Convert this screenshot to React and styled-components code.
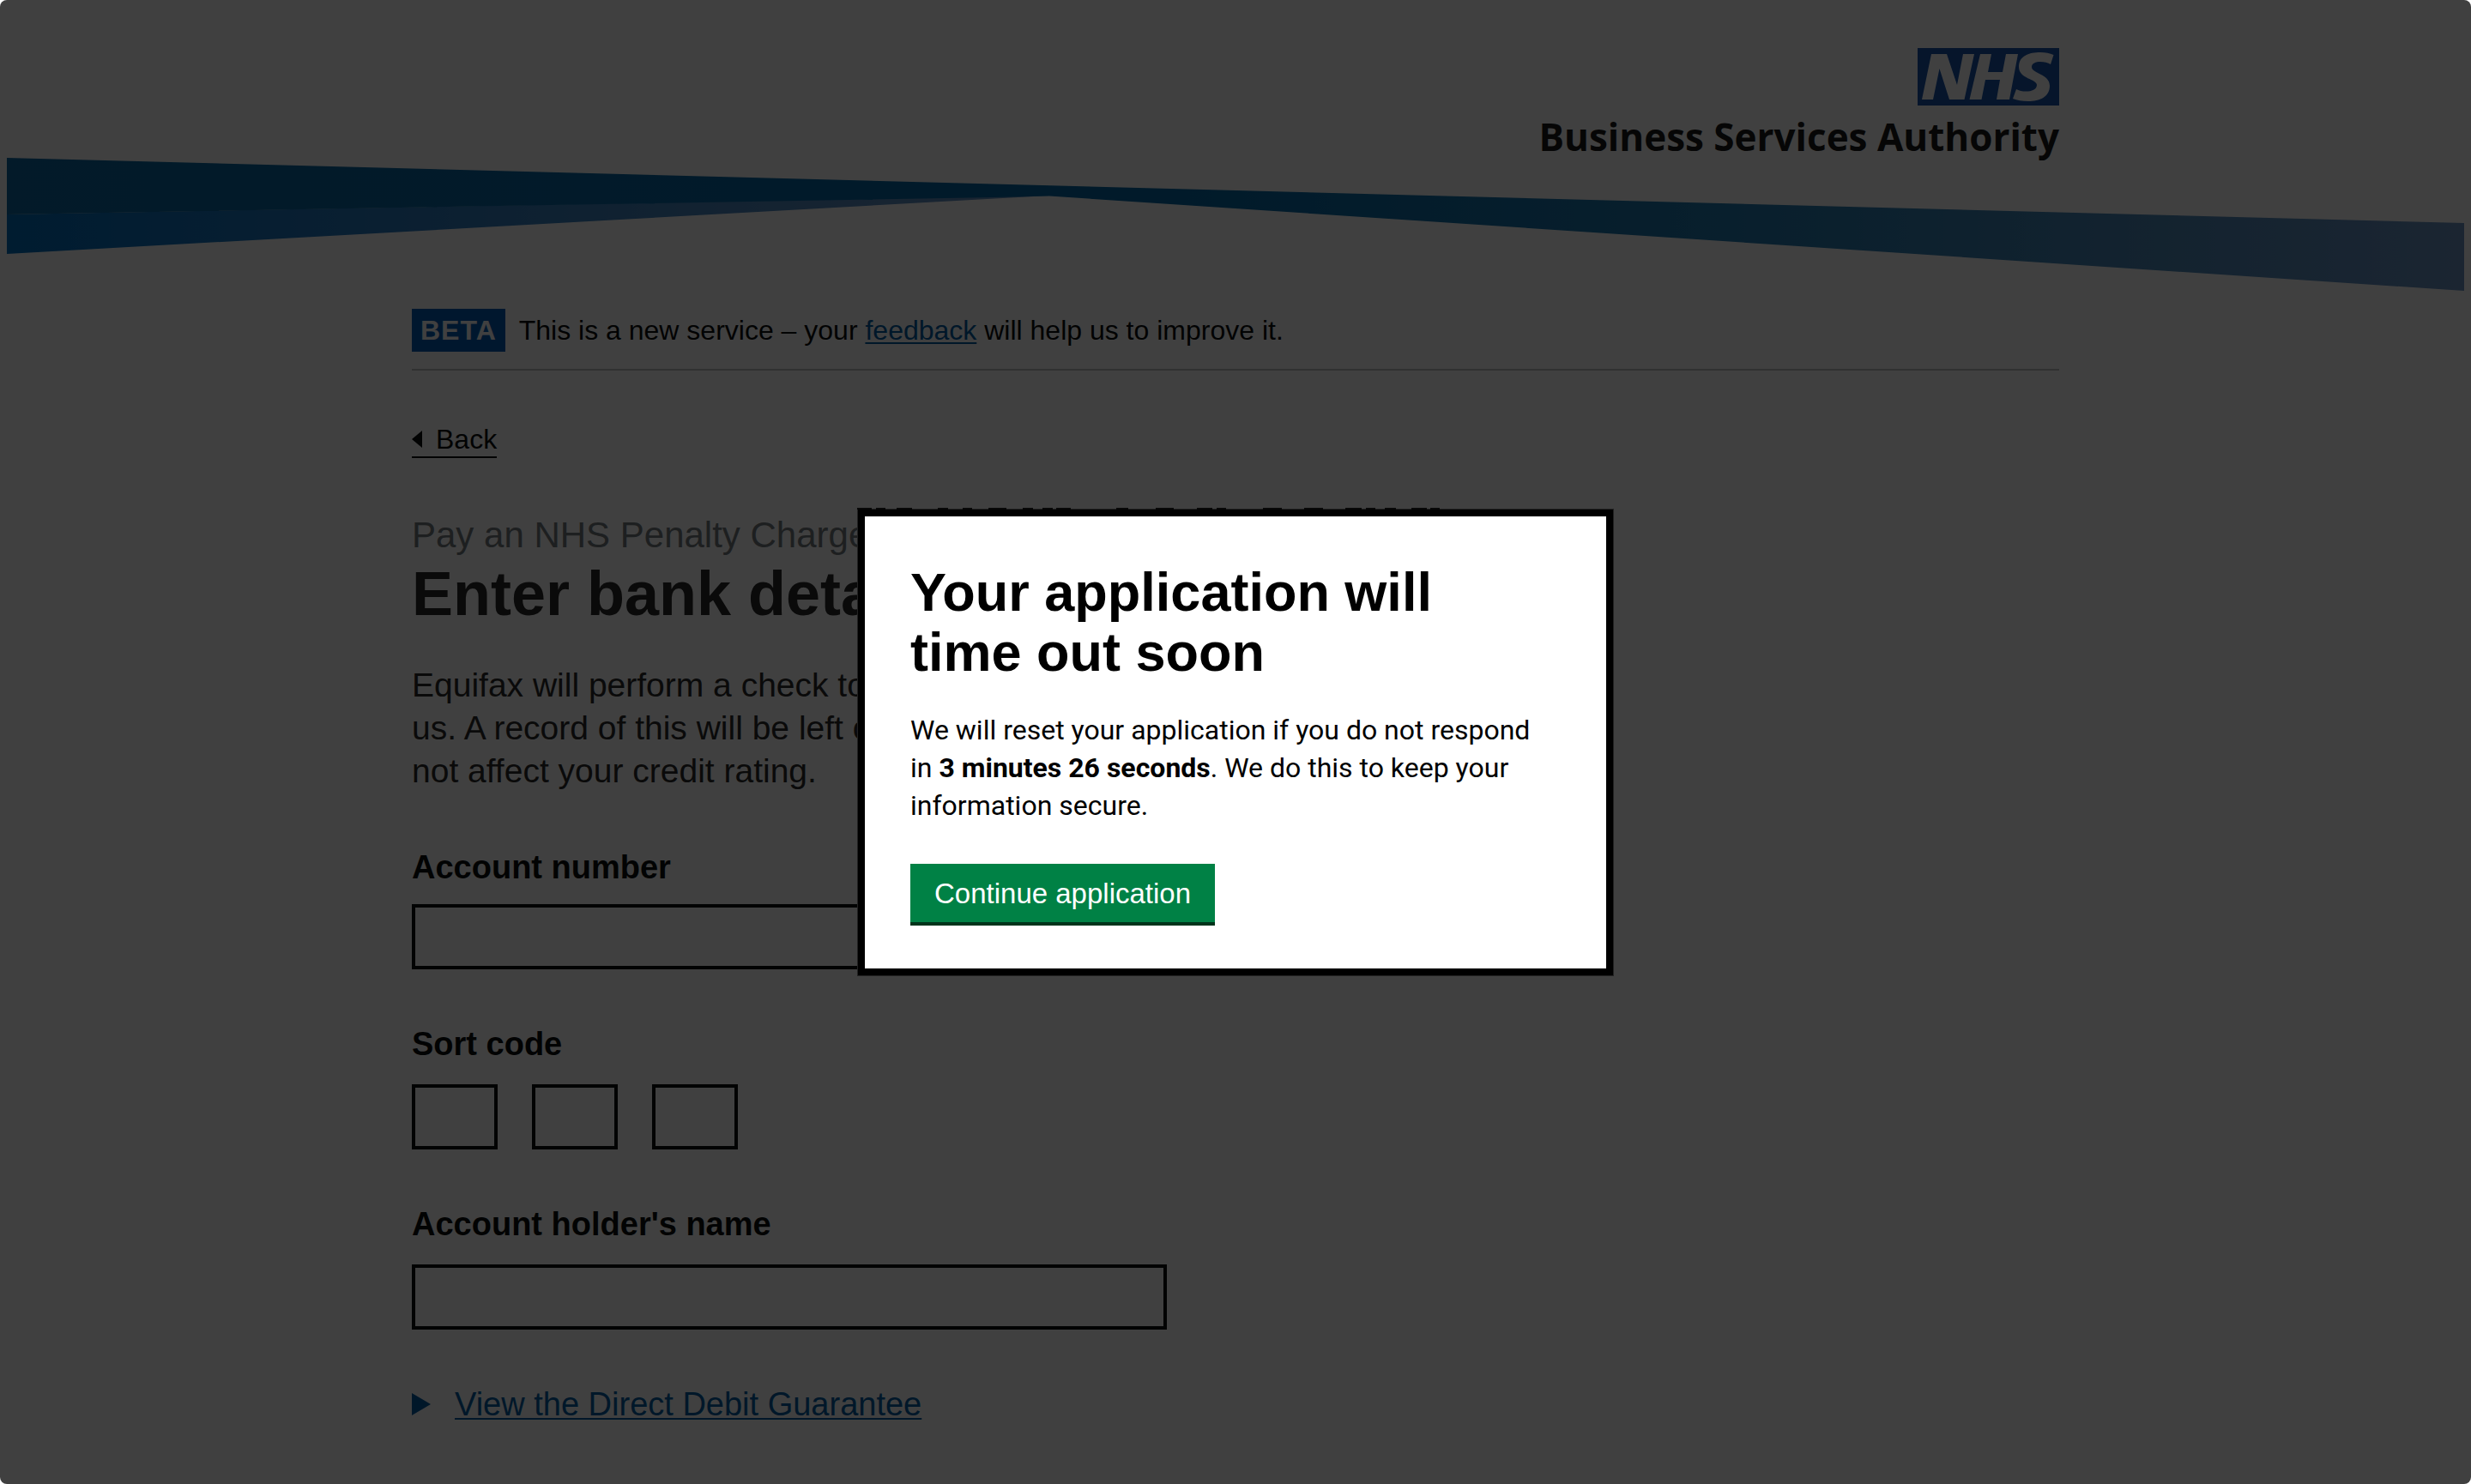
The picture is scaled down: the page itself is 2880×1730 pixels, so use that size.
import React from "react";
import styled, { createGlobalStyle } from "styled-components";

const GlobalStyle = createGlobalStyle`
  *, *::before, *::after { box-sizing: border-box; }
  html { background: #fff; }
  body {
    margin: 0;
    color: #0b0c0c;
    font-family: "Liberation Sans", Arial, sans-serif;
    font-size: 32px;
    line-height: 40px;
  }
`;

const Page = styled.div`
  position: relative;
  min-height: 100vh;
  overflow: hidden;
  border-radius: 8px;
  background: #fff;
`;

const Width = styled.div`
  width: min(100% - 160px, 1920px);
  margin: 0 auto;
`;

const Header = styled.header`
  padding: 56px 0 0;
`;

const Brand = styled(Width)`
  display: flex;
  flex-direction: column;
  align-items: flex-end;
`;

const NhsMark = styled.svg`
  display: block;
  width: 165px;
  height: 67px;
`;

const BrandName = styled.span`
  margin-top: 6px;
  color: #181818;
  font-family: "Open Sans", "Noto Sans", sans-serif;
  font-size: 44px;
  font-weight: 700;
  line-height: 60px;
  white-space: nowrap;
`;

const Ribbon = styled.svg`
  display: block;
  width: calc(100% - 16px);
  height: 156px;
  margin: -5px 8px 0;
`;

const PhaseBanner = styled.div`
  display: flex;
  align-items: center;
  gap: 16px;
  margin-top: 20px;
  padding-bottom: 20px;
  border-bottom: 2px solid #bfc1c3;
`;

const PhaseTag = styled.strong`
  padding: 5px 10px;
  background: #005eb8;
  color: #fff;
  letter-spacing: 1px;
`;

const TextLink = styled.a`
  color: #005ea5;
  text-decoration: underline;
  text-decoration-thickness: 2px;
  text-underline-offset: 3px;
`;

const BackLink = styled.a`
  display: inline-flex;
  align-items: center;
  gap: 16px;
  margin-top: 60px;
  border-bottom: 2px solid #0b0c0c;
  color: #0b0c0c;
  text-decoration: none;

  &::before {
    content: "";
    border: solid transparent;
    border-width: 10px 12px 10px 0;
    border-right-color: #0b0c0c;
  }
`;

const Main = styled.main`
  width: 66%;
  padding-top: 62px;
`;

const Title = styled.h1`
  margin: 0 0 42px;
  color: #292929;
  font-size: 72px;
  line-height: 80px;
`;

const Caption = styled.span`
  display: block;
  color: #757b7f;
  font-size: 42px;
  font-weight: 400;
  line-height: 56px;
`;

const Lead = styled.p`
  margin: 0;
  color: #292929;
  font-size: 39px;
  line-height: 50px;
`;

const Form = styled.form`
  display: flex;
  flex-direction: column;
  gap: 62px;
  padding-top: 62px;
`;

const Field = styled.div`
  display: flex;
  flex-direction: column;
  gap: ${(p) => (p.$tight ? "18px" : "22px")};
`;

const Group = styled.fieldset`
  margin: 0;
  padding: 0;
  border: 0;
`;

const Label = styled.label`
  font-size: 38px;
  font-weight: 700;
  line-height: 50px;
`;

const Legend = styled.legend`
  margin-bottom: 22px;
  padding: 0;
  font-size: 38px;
  font-weight: 700;
  line-height: 50px;
`;

const Input = styled.input`
  width: ${(p) => p.$width};
  height: 76px;
  padding: 8px;
  border: 4px solid #0b0c0c;
  border-radius: 0;
  background: #fff;
  font: inherit;
`;

const SortCode = styled.div`
  display: flex;
  gap: 40px;
`;

const Details = styled.details`
  color: #005ea5;
  font-size: 38px;
  line-height: 50px;
`;

const Summary = styled.summary`
  display: flex;
  align-items: center;
  gap: 28px;
  list-style: none;
  text-decoration: underline;
  text-decoration-thickness: 2px;
  text-underline-offset: 3px;

  &::before {
    content: "";
    border: solid transparent;
    border-width: 13px 0 13px 22px;
    border-left-color: #005ea5;
  }
`;

const Backdrop = styled.div`
  position: absolute;
  inset: 0;
  display: flex;
  align-items: center;
  justify-content: center;
  background: rgba(0, 0, 0, 0.75);
`;

const Dialog = styled.div`
  position: relative;
  width: 880px;
  padding: 53px 76px 50px 53px;
  border: 8px solid #000;
  box-shadow: 0 0 0 1px #222;
  background: #fff;
  color: #000;
`;

const DialogEdge = styled.svg`
  position: absolute;
  top: -10px;
  left: -9px;
  width: 679px;
  height: 2px;
`;

const DialogTitle = styled.h2`
  max-width: 700px;
  margin: 0 0 34px;
  font-size: 63px;
  line-height: 70px;
`;

const DialogText = styled.p`
  margin: 0;
  font-family: Roboto, "Liberation Sans", sans-serif;
  font-size: 32px;
  line-height: 44px;
`;

const ContinueButton = styled.button`
  display: block;
  margin-top: 46px;
  padding: 16px 28px 14px;
  border: 0;
  border-bottom: 4px solid #00341b;
  background: #008145;
  color: #fff;
  font: 33px/38px "Liberation Sans", Arial, sans-serif;
`;

const edgeMarks = [
  [0, 17], [22, 33], [46, 64], [94, 106], [123, 134], [153, 174], [193, 205],
  [216, 228], [232, 249], [302, 316], [348, 369], [396, 414], [419, 430],
  [473, 495], [521, 543], [569, 588], [593, 604], [615, 628], [646, 664], [668, 679],
];

export default function App() {
  return (
    <>
      <GlobalStyle />
      <Page>
        <Header>
          <Brand>
            <NhsMark viewBox="0 0 165 67" role="img" aria-label="NHS">
              <rect width="165" height="67" fill="#1a56ac" />
              <g fill="#fff">
                <path d="M16 7H34L46 43L53 7H66L54.500 60H37L25.500 24L18 60H5Z" />
                <path d="M73 7H86L82 28H99L103 7H117L107 60H92L96 37H79L74.500 60H60.500Z" />
                <path d="M158.500 8L155 19C149 15 133 14 133 22C133 30 154 30 154 44C154 57 142 62 129 62C122 62 116 61 111 59L115 48C122 52 139 52 139 43C139 36 118 36 118 22C118 9 130 5 143 5C149 5 154 6 158.500 8Z" />
              </g>
            </NhsMark>
            <BrandName>Business Services Authority</BrandName>
          </Brand>
          <Ribbon viewBox="0 0 2864 156" preserveAspectRatio="none" aria-hidden="true">
            <defs>
              <linearGradient id="upper" gradientUnits="userSpaceOnUse" x1="0" y1="0" x2="2864" y2="0">
                <stop offset="0" stopColor="#0c68a4" />
                <stop offset="0.48" stopColor="#046aa8" />
                <stop offset="0.7" stopColor="#227cb2" />
                <stop offset="1" stopColor="#6c94c4" />
              </linearGradient>
              <linearGradient id="lower" gradientUnits="userSpaceOnUse" x1="0" y1="0" x2="1215" y2="0">
                <stop offset="0" stopColor="#0070c0" />
                <stop offset="0.35" stopColor="#287cc4" />
                <stop offset="1" stopColor="#6c94c4" />
              </linearGradient>
            </defs>
            <path d="M0 66L1215 44L0 112Z" fill="url(#lower)" />
            <path d="M0 0L2864 76V155L1215 44.500L1152 46L0 66Z" fill="url(#upper)" />
          </Ribbon>
        </Header>

        <Width>
          <PhaseBanner>
            <PhaseTag>BETA</PhaseTag>
            <span>
              This is a new service – your <TextLink href="#feedback">feedback</TextLink> will help us to improve it.
            </span>
          </PhaseBanner>
          <BackLink href="#back">Back</BackLink>

          <Main>
            <Title>
              <Caption>Pay an NHS Penalty Charge</Caption>
              Enter bank details
            </Title>
            <Lead>
              Equifax will perform a check to
              <br />
              us. A record of this will be left on
              <br />
              not affect your credit rating.
            </Lead>
            <Form>
              <Field $tight>
                <Label htmlFor="account-number">Account number</Label>
                <Input id="account-number" $width="880px" />
              </Field>
              <Group>
                <Legend>Sort code</Legend>
                <SortCode>
                  <Input $width="100px" aria-label="Sort code, first part" />
                  <Input $width="100px" aria-label="Sort code, second part" />
                  <Input $width="100px" aria-label="Sort code, third part" />
                </SortCode>
              </Group>
              <Field>
                <Label htmlFor="holder-name">Account holder's name</Label>
                <Input id="holder-name" $width="880px" />
              </Field>
              <Details>
                <Summary>View the Direct Debit Guarantee</Summary>
              </Details>
            </Form>
          </Main>
        </Width>

        <Backdrop>
          <Dialog role="dialog" aria-modal="true" aria-labelledby="timeout-title">
            <DialogEdge viewBox="0 0 679 2" aria-hidden="true">
              {edgeMarks.map(([from, to]) => (
                <rect key={from} x={from} width={to - from} height="2" fill="#080808" />
              ))}
            </DialogEdge>
            <DialogTitle id="timeout-title">Your application will time out soon</DialogTitle>
            <DialogText>
              We will reset your application if you do not respond in <strong>3 minutes 26 seconds</strong>. We do this
              to keep your information secure.
            </DialogText>
            <ContinueButton type="button">Continue application</ContinueButton>
          </Dialog>
        </Backdrop>
      </Page>
    </>
  );
}
